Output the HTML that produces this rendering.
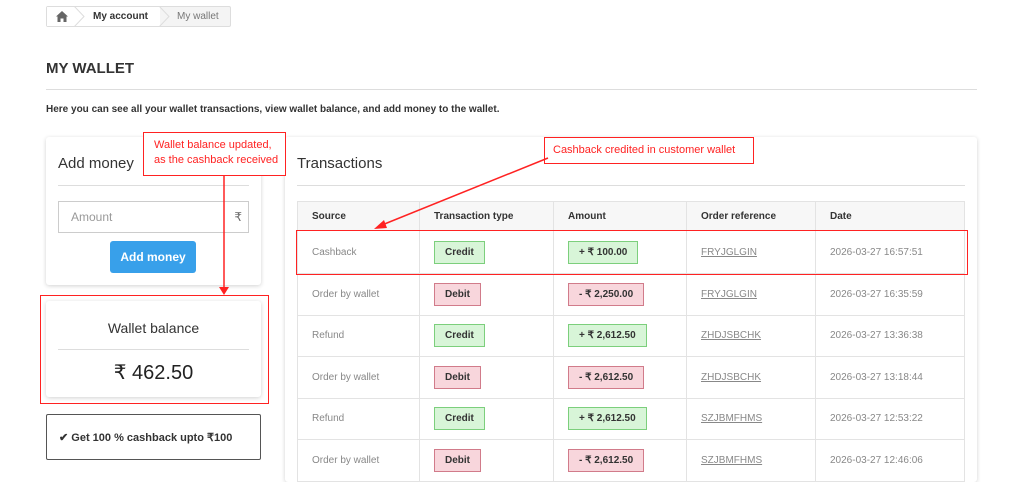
<!DOCTYPE html>
<html><head><meta charset="utf-8"><style>
*{box-sizing:border-box;margin:0;padding:0}
body{width:1024px;height:476px;background:#fff;font-family:"Liberation Sans",sans-serif;color:#333;position:relative;overflow:hidden}
.a{position:absolute}
.card{position:absolute;background:#fff;border-radius:3px;box-shadow:0 1px 4px rgba(0,0,0,.18)}
.hr{position:absolute;height:1px;background:#ddd}
table{position:absolute;left:297px;top:201px;width:668px;border-collapse:collapse;font-size:10px}
td,th{border:1px solid #e3e3e3;padding:0 0 0 14px;text-align:left;height:41.5px}
th{height:29px;background:#f7f7f7;font-weight:bold;color:#333}
td{color:#888}
tr.f td{height:43px}
.b{display:inline-block;border:1px solid;padding:5px 10px;font-weight:bold;color:#333;font-size:10px}
.c{background:#d8f5d8;border-color:#7ccf7c}
.d{background:#f8d6dc;border-color:#d17b8a}
td a{color:#888;text-decoration:underline}
.red{position:absolute;border:1.5px solid #f22}
.note{position:absolute;border:1.5px solid #f22;background:#fff;color:#f22;font-size:11px;line-height:15px}
</style></head><body>
<div class="a" style="left:46px;top:6px;width:185px;height:21px;border:1px solid #ddd;border-radius:2px;background:#f4f4f4"></div>
<div class="a" style="left:47px;top:7px;width:113px;height:19px;background:#fff"></div>
<svg class="a" style="left:56px;top:11px" width="12" height="11"><path d="M6 0 L12 5.5 L10.5 5.5 L10.5 11 L7.5 11 L7.5 7.5 L4.5 7.5 L4.5 11 L1.5 11 L1.5 5.5 L0 5.5 Z" fill="#666"/></svg>
<div class="a" style="left:93px;top:11px;font-size:10px;font-weight:bold">My account</div>
<div class="a" style="left:177px;top:11px;font-size:10px;color:#777">My wallet</div>
<svg class="a" style="left:74px;top:6px" width="100" height="21"><path d="M0 0 L10 10.5 L0 21 M85 0 L95 10.5 L85 21" stroke="#ddd" fill="none"/></svg>
<div class="a" style="left:46px;top:60px;font-size:15px;font-weight:bold">MY WALLET</div>
<div class="hr" style="left:46px;top:89px;width:931px"></div>
<div class="a" style="left:46px;top:104px;font-size:10px;font-weight:bold">Here you can see all your wallet transactions, view wallet balance, and add money to the wallet.</div>

<div class="card" style="left:46px;top:137px;width:215px;height:148px"></div>
<div class="a" style="left:58px;top:155px;font-size:15px">Add money</div>
<div class="hr" style="left:58px;top:185px;width:191px"></div>
<div class="a" style="left:58px;top:201px;width:191px;height:32px;border:1px solid #ccc;font-size:12px;color:#999;padding:8px 12px">Amount<span style="position:absolute;right:6px;top:8px;color:#666">₹</span></div>
<div class="a" style="left:110px;top:241px;width:86px;height:32px;background:#38a0ea;border-radius:3px;color:#fff;font-weight:bold;font-size:12px;text-align:center;line-height:32px">Add money</div>

<div class="card" style="left:46px;top:301px;width:215px;height:96px"></div>
<div class="a" style="left:46px;top:320px;width:215px;text-align:center;font-size:14px">Wallet balance</div>
<div class="hr" style="left:58px;top:349px;width:191px"></div>
<div class="a" style="left:46px;top:360px;width:215px;text-align:center;font-size:20px;color:#222">₹ 462.50</div>
<div class="red" style="left:40px;top:295px;width:229px;height:109px"></div>
<div class="a" style="left:46px;top:414px;width:215px;height:46px;border:1px solid #555;border-radius:2px;font-size:11px;font-weight:bold;padding:16px 12px">✔ Get 100 % cashback upto ₹100</div>

<div class="card" style="left:285px;top:137px;width:692px;height:345px"></div>
<div class="a" style="left:297px;top:155px;font-size:15px">Transactions</div>
<div class="hr" style="left:297px;top:185px;width:668px"></div>
<table>
<tr><th style="width:122px">Source</th><th style="width:134px">Transaction type</th><th style="width:133px">Amount</th><th style="width:129px">Order reference</th><th>Date</th></tr>
<tr class="f"><td>Cashback</td><td><span class="b c">Credit</span></td><td><span class="b c">+ ₹ 100.00</span></td><td><a>FRYJGLGIN</a></td><td>2026-03-27 16:57:51</td></tr>
<tr><td>Order by wallet</td><td><span class="b d">Debit</span></td><td><span class="b d">- ₹ 2,250.00</span></td><td><a>FRYJGLGIN</a></td><td>2026-03-27 16:35:59</td></tr>
<tr><td>Refund</td><td><span class="b c">Credit</span></td><td><span class="b c">+ ₹ 2,612.50</span></td><td><a>ZHDJSBCHK</a></td><td>2026-03-27 13:36:38</td></tr>
<tr><td>Order by wallet</td><td><span class="b d">Debit</span></td><td><span class="b d">- ₹ 2,612.50</span></td><td><a>ZHDJSBCHK</a></td><td>2026-03-27 13:18:44</td></tr>
<tr><td>Refund</td><td><span class="b c">Credit</span></td><td><span class="b c">+ ₹ 2,612.50</span></td><td><a>SZJBMFHMS</a></td><td>2026-03-27 12:53:22</td></tr>
<tr><td>Order by wallet</td><td><span class="b d">Debit</span></td><td><span class="b d">- ₹ 2,612.50</span></td><td><a>SZJBMFHMS</a></td><td>2026-03-27 12:46:06</td></tr>
</table>
<div class="red" style="left:296px;top:230px;width:672px;height:45px"></div>

<div class="note" style="left:143px;top:132px;width:143px;height:44px;padding:5px 0 0 10px">Wallet balance updated,<br>as the cashback received</div>
<div class="note" style="left:544px;top:137px;width:210px;height:27px;padding:5px 0 0 8px">Cashback credited in customer wallet</div>
<svg class="a" style="left:0;top:0" width="1024" height="476">
<line x1="224" y1="176" x2="224" y2="289" stroke="#f22" stroke-width="1.5"/>
<path d="M219 287 L229 287 L224 295 Z" fill="#f22"/>
<line x1="548" y1="158" x2="382" y2="225" stroke="#f22" stroke-width="1.5"/>
<path d="M374 229 L384 220 L387 228 Z" fill="#f22"/>
</svg>
</body></html>
